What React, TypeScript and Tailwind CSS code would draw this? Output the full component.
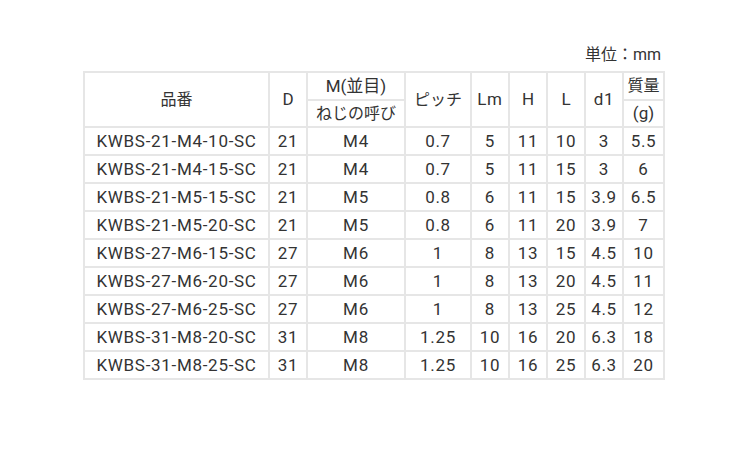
import React from "react";

const rows = [
  ["KWBS-21-M4-10-SC", "21", "M4", "0.7", "5", "11", "10", "3", "5.5"],
  ["KWBS-21-M4-15-SC", "21", "M4", "0.7", "5", "11", "15", "3", "6"],
  ["KWBS-21-M5-15-SC", "21", "M5", "0.8", "6", "11", "15", "3.9", "6.5"],
  ["KWBS-21-M5-20-SC", "21", "M5", "0.8", "6", "11", "20", "3.9", "7"],
  ["KWBS-27-M6-15-SC", "27", "M6", "1", "8", "13", "15", "4.5", "10"],
  ["KWBS-27-M6-20-SC", "27", "M6", "1", "8", "13", "20", "4.5", "11"],
  ["KWBS-27-M6-25-SC", "27", "M6", "1", "8", "13", "25", "4.5", "12"],
  ["KWBS-31-M8-20-SC", "31", "M8", "1.25", "10", "16", "20", "6.3", "18"],
  ["KWBS-31-M8-25-SC", "31", "M8", "1.25", "10", "16", "25", "6.3", "20"],
];

const cell = "bg-white flex items-center justify-center whitespace-nowrap";
const latin = "tracking-[0.7px]";

export default function App() {
  return (
    <div
      className="w-[750px] h-[450px] bg-white text-[#333] text-[17px] leading-none"
      style={{ fontFamily: 'Roboto, "Noto Sans CJK JP", sans-serif' }}
    >
      <div className="pt-[47px] pl-[83px] w-[665px]">
        <div className="h-[24px] flex justify-end pr-[4px] text-[16px]">単位：mm</div>
        <div className="grid grid-cols-[183px_36px_96px_64px_36px_36px_36px_36px_39px] grid-rows-[26px_25px_repeat(9,26px)] gap-[2px] p-[2px] bg-[#e6e6e6] w-[582px]">
          <div className={`${cell} row-span-2 text-[16px]`}>品番</div>
          <div className={`${cell} row-span-2`}>D</div>
          <div className={cell}>M(並目)</div>
          <div className={`${cell} row-span-2 text-[16px]`}>ピッチ</div>
          <div className={`${cell} row-span-2 ${latin}`}>Lm</div>
          <div className={`${cell} row-span-2`}>H</div>
          <div className={`${cell} row-span-2`}>L</div>
          <div className={`${cell} row-span-2 ${latin}`}>d1</div>
          <div className={`${cell} text-[16px]`}>質量</div>
          <div className={`${cell} text-[16px]`}>ねじの呼び</div>
          <div className={cell}>(g)</div>
          {rows.map((r, i) =>
            r.map((v, j) => (
              <div key={`${i}-${j}`} className={`${cell} ${latin}`}>
                {v}
              </div>
            ))
          )}
        </div>
      </div>
    </div>
  );
}
